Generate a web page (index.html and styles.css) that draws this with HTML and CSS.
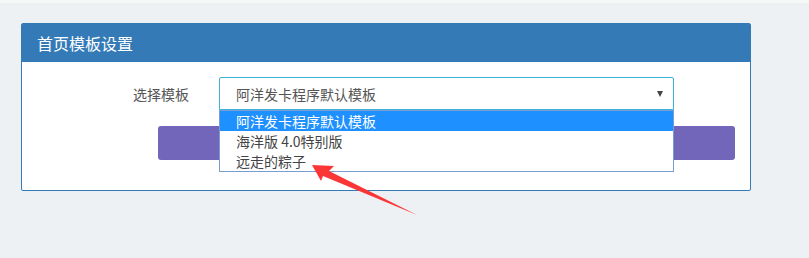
FILE: index.html
```html
<!DOCTYPE html>
<html lang="zh-CN">
<head>
<meta charset="utf-8">
<title>首页模板设置</title>
<link rel="stylesheet" href="styles.css">
</head>
<body>
<div class="topbar"></div>
<main class="content">
  <section class="panel">
    <header class="panel-heading">首页模板设置</header>
    <div class="panel-body">
      <div class="form-row">
        <label class="form-label">选择模板</label>
        <div class="select-wrap">
          <div class="select">
            <span class="select-value">阿洋发卡程序默认模板</span>
            <span class="caret"></span>
          </div>
          <ul class="options">
            <li class="option active">阿洋发卡程序默认模板</li>
            <li class="option">海洋版 4.0特别版</li>
            <li class="option">远走的粽子</li>
          </ul>
        </div>
      </div>
      <div class="btn-row">
        <div class="btn-submit"></div>
      </div>
    </div>
  </section>
</main>
<svg class="annot-arrow" width="809" height="258" viewBox="0 0 809 258">
  <polygon points="312,165 334,166 329,171 417,215 323,176 321,181" fill="#fb3636"/>
</svg>
</body>
</html>
```

FILE: styles.css
```css
html, body {
  margin: 0;
  padding: 0;
}
body {
  width: 809px;
  height: 258px;
  background: #eef1f3;
  font-family: "Noto Sans CJK SC", "Noto Sans", "Liberation Sans", sans-serif;
  position: relative;
  overflow: hidden;
}
.topbar {
  height: 3px;
  background: #f6f7f7;
}
.content {
  padding: 20px 0 0 21px;
}
.panel {
  width: 728px;
  border: 1px solid #337ab7;
  border-radius: 2px;
  background: #fff;
}
.panel-heading {
  height: 38px;
  line-height: 38px;
  background: #337ab7;
  color: #fff;
  font-size: 16px;
  padding-left: 15px;
}
.panel-body {
  padding: 15px 0 30px 0;
}
.form-row {
  display: flex;
  align-items: center;
}
.form-label {
  width: 167px;
  padding-right: 30px;
  text-align: right;
  font-size: 14px;
  color: #555;
  box-sizing: content-box;
}
.select-wrap {
  position: relative;
  width: 455px;
}
.select {
  height: 31px;
  border: 1px solid #3ab2da;
  border-radius: 2px 2px 0 0;
  display: flex;
  align-items: center;
  padding: 0 7px 0 16px;
  font-size: 14px;
  color: #555;
}
.select-value {
  flex: 1;
}
.caret {
  width: 0;
  height: 0;
  border-left: 3.5px solid transparent;
  border-right: 3.5px solid transparent;
  border-top: 6px solid #444;
  margin-right: 3px;
}
.options {
  position: absolute;
  left: 0;
  top: 33px;
  width: 453px;
  margin: 0;
  padding: 0;
  list-style: none;
  border: 1px solid #7b9cd3;
  background: #fff;
  z-index: 2;
}
.option {
  height: 20px;
  line-height: 20px;
  padding-left: 16px;
  font-size: 14px;
  color: #444;
}
.option.active {
  background: #1e90ff;
  color: #fff;
}
.btn-row {
  margin: 16px 0 0 136px;
}
.btn-submit {
  width: 577px;
  height: 34px;
  background: #7266ba;
  border-radius: 3px;
}
.annot-arrow {
  position: absolute;
  left: 0;
  top: 0;
  pointer-events: none;
  z-index: 5;
}
```
